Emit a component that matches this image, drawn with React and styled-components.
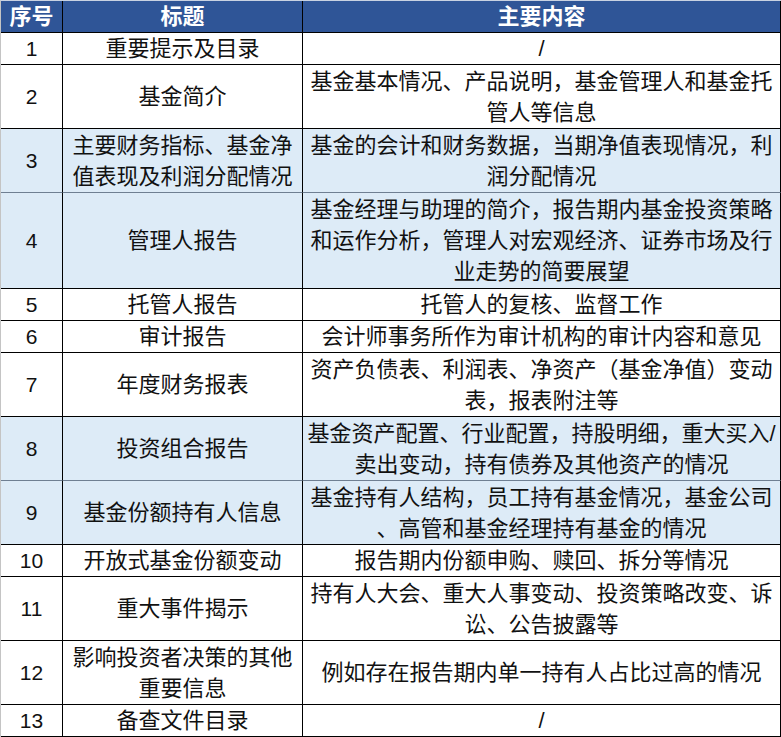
import styled, { createGlobalStyle } from 'styled-components';

const GlobalStyle = createGlobalStyle`
    html, body {
        margin: 0;
        padding: 0;
        background: #ffffff;
    }
    body {
        font-family: "Liberation Sans", "Noto Sans CJK SC", sans-serif;
    }
`;

const ROWS = [
    { no: '1', title: ['重要提示及目录'], content: ['/'], lines: 1 },
    { no: '2', title: ['基金简介'], content: ['基金基本情况、产品说明，基金管理人和基金托', '管人等信息'], lines: 2 },
    { no: '3', title: ['主要财务指标、基金净', '值表现及利润分配情况'], content: ['基金的会计和财务数据，当期净值表现情况，利', '润分配情况'], lines: 2, shade: true },
    { no: '4', title: ['管理人报告'], content: ['基金经理与助理的简介，报告期内基金投资策略', '和运作分析，管理人对宏观经济、证券市场及行', '业走势的简要展望'], lines: 3, shade: true },
    { no: '5', title: ['托管人报告'], content: ['托管人的复核、监督工作'], lines: 1 },
    { no: '6', title: ['审计报告'], content: ['会计师事务所作为审计机构的审计内容和意见'], lines: 1 },
    { no: '7', title: ['年度财务报表'], content: ['资产负债表、利润表、净资产（基金净值）变动', '表，报表附注等'], lines: 2 },
    { no: '8', title: ['投资组合报告'], content: ['基金资产配置、行业配置，持股明细，重大买入/', '卖出变动，持有债券及其他资产的情况'], lines: 2, shade: true },
    { no: '9', title: ['基金份额持有人信息'], content: ['基金持有人结构，员工持有基金情况，基金公司', '、高管和基金经理持有基金的情况'], lines: 2, shade: true },
    { no: '10', title: ['开放式基金份额变动'], content: ['报告期内份额申购、赎回、拆分等情况'], lines: 1 },
    { no: '11', title: ['重大事件揭示'], content: ['持有人大会、重大人事变动、投资策略改变、诉', '讼、公告披露等'], lines: 2 },
    { no: '12', title: ['影响投资者决策的其他', '重要信息'], content: ['例如存在报告期内单一持有人占比过高的情况'], lines: 2 },
    { no: '13', title: ['备查文件目录'], content: ['/'], lines: 1 },
];

const Table = styled.div`
    width: 781px;
    box-sizing: border-box;
    border-left: 1px solid #c4c4c4;
    border-top: 1px solid #c9d2e2;
`;

const Row = styled.div`
    display: grid;
    grid-template-columns: 62px 240px 478px;
    height: ${p => p.$lines * 32}px;
    background: ${p => (p.$header ? '#2f5597' : p.$shade ? '#ddebf7' : '#ffffff')};
    color: ${p => (p.$header ? '#ffffff' : '#111111')};
    font-weight: ${p => (p.$header ? 700 : 400)};
`;

const Cell = styled.div`
    box-sizing: border-box;
    display: flex;
    flex-direction: column;
    align-items: center;
    justify-content: center;
    border-right: 1px solid #000;
    border-bottom: 1px solid ${p => (p.$soft ? '#6f7f92' : '#000')};
    font-size: 22px;
    line-height: 31px;
    white-space: nowrap;
    overflow: hidden;
`;

const Line = styled.span`
    display: block;
`;

const Num = styled.span`
    font-family: "Liberation Sans", sans-serif;
    font-size: 21px;
`;

function Lines({ items }) {
    return items.map((t, i) => <Line key={i}>{t}</Line>);
}

export default function App() {
    return (
        <>
            <GlobalStyle />
            <Table>
                <Row $header $lines={1}>
                    <Cell>序号</Cell>
                    <Cell>标题</Cell>
                    <Cell>主要内容</Cell>
                </Row>
                {ROWS.map((r, i) => {
                    const soft = r.shade && ROWS[i + 1] && ROWS[i + 1].shade;
                    return (
                        <Row key={r.no} $lines={r.lines} $shade={r.shade}>
                            <Cell $soft={soft}><Num>{r.no}</Num></Cell>
                            <Cell $soft={soft}><Lines items={r.title} /></Cell>
                            <Cell $soft={soft}><Lines items={r.content} /></Cell>
                        </Row>
                    );
                })}
            </Table>
        </>
    );
}
